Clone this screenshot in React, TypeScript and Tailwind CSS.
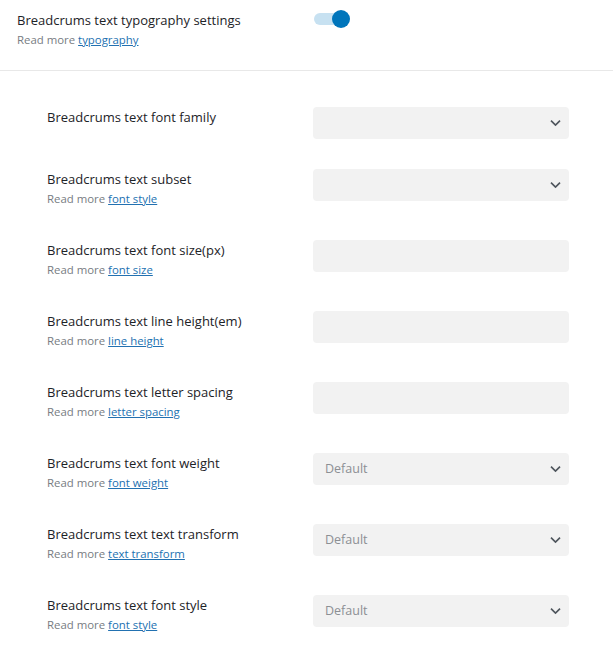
import React from "react";

const font = { fontFamily: '"Open Sans", "Noto Sans", sans-serif' };

function Chevron() {
  return (
    <svg width="11" height="7" viewBox="0 0 11 7" className="absolute right-[8px] top-1/2 -translate-y-1/2">
      <path d="M1 1.2 L5.5 5.5 L10 1.2" fill="none" stroke="#50575e" strokeWidth="1.7" />
    </svg>
  );
}

function Select({ value }: { value?: string }) {
  return (
    <div className="relative h-[32px] w-[256px] rounded-[4px] bg-[#f2f2f2] flex items-center pl-[12px] text-[12.5px] text-[#8c8f94]">
      {value}
      <Chevron />
    </div>
  );
}

function Input() {
  return <div className="h-[32px] w-[256px] rounded-[4px] bg-[#f2f2f2]" />;
}

type Row = { label: string; link?: string; kind: "select" | "input"; value?: string };

const rows: Row[] = [
  { label: "Breadcrums text font family", kind: "select" },
  { label: "Breadcrums text subset", link: "font style", kind: "select" },
  { label: "Breadcrums text font size(px)", link: "font size", kind: "input" },
  { label: "Breadcrums text line height(em)", link: "line height", kind: "input" },
  { label: "Breadcrums text letter spacing", link: "letter spacing", kind: "input" },
  { label: "Breadcrums text font weight", link: "font weight", kind: "select", value: "Default" },
  { label: "Breadcrums text text transform", link: "text transform", kind: "select", value: "Default" },
  { label: "Breadcrums text font style", link: "font style", kind: "select", value: "Default" },
];

export default function App() {
  return (
    <div className="w-[613px] h-[663px] bg-white overflow-hidden" style={font}>
      <div className="flex items-start pl-[17px] pt-[10px] h-[71px] border-b border-[#e8e8e8]">
        <div className="w-[297px]">
          <div className="text-[13px] leading-[20px] text-[#1d2327]">Breadcrums text typography settings</div>
          <div className="text-[11.4px] leading-[19px] text-[#787c82]">
            Read more <span className="text-[#2271b1] underline">typography</span>
          </div>
        </div>
        <div className="relative w-[36px] h-[18px] flex items-center">
          <div className="absolute left-0 w-[32px] h-[12px] rounded-full bg-[#c7e1f1]" />
          <div className="absolute left-[18px] w-[18px] h-[18px] rounded-full bg-[#0075bb]" />
        </div>
      </div>
      <div className="pt-[21px] pl-[47px]">
        {rows.map((r, i) => (
          <div key={i} className="flex items-start py-[15px]">
            <div className={r.link ? "w-[266px] h-[41px]" : "w-[266px] h-[32px]"}>
              <div className="text-[13px] leading-[20px] text-[#1d2327]">{r.label}</div>
              {r.link && (
                <div className="text-[11.4px] leading-[19px] text-[#787c82]">
                  Read more <span className="text-[#2271b1] underline">{r.link}</span>
                </div>
              )}
            </div>
            {r.kind === "select" ? <Select value={r.value} /> : <Input />}
          </div>
        ))}
      </div>
    </div>
  );
}
